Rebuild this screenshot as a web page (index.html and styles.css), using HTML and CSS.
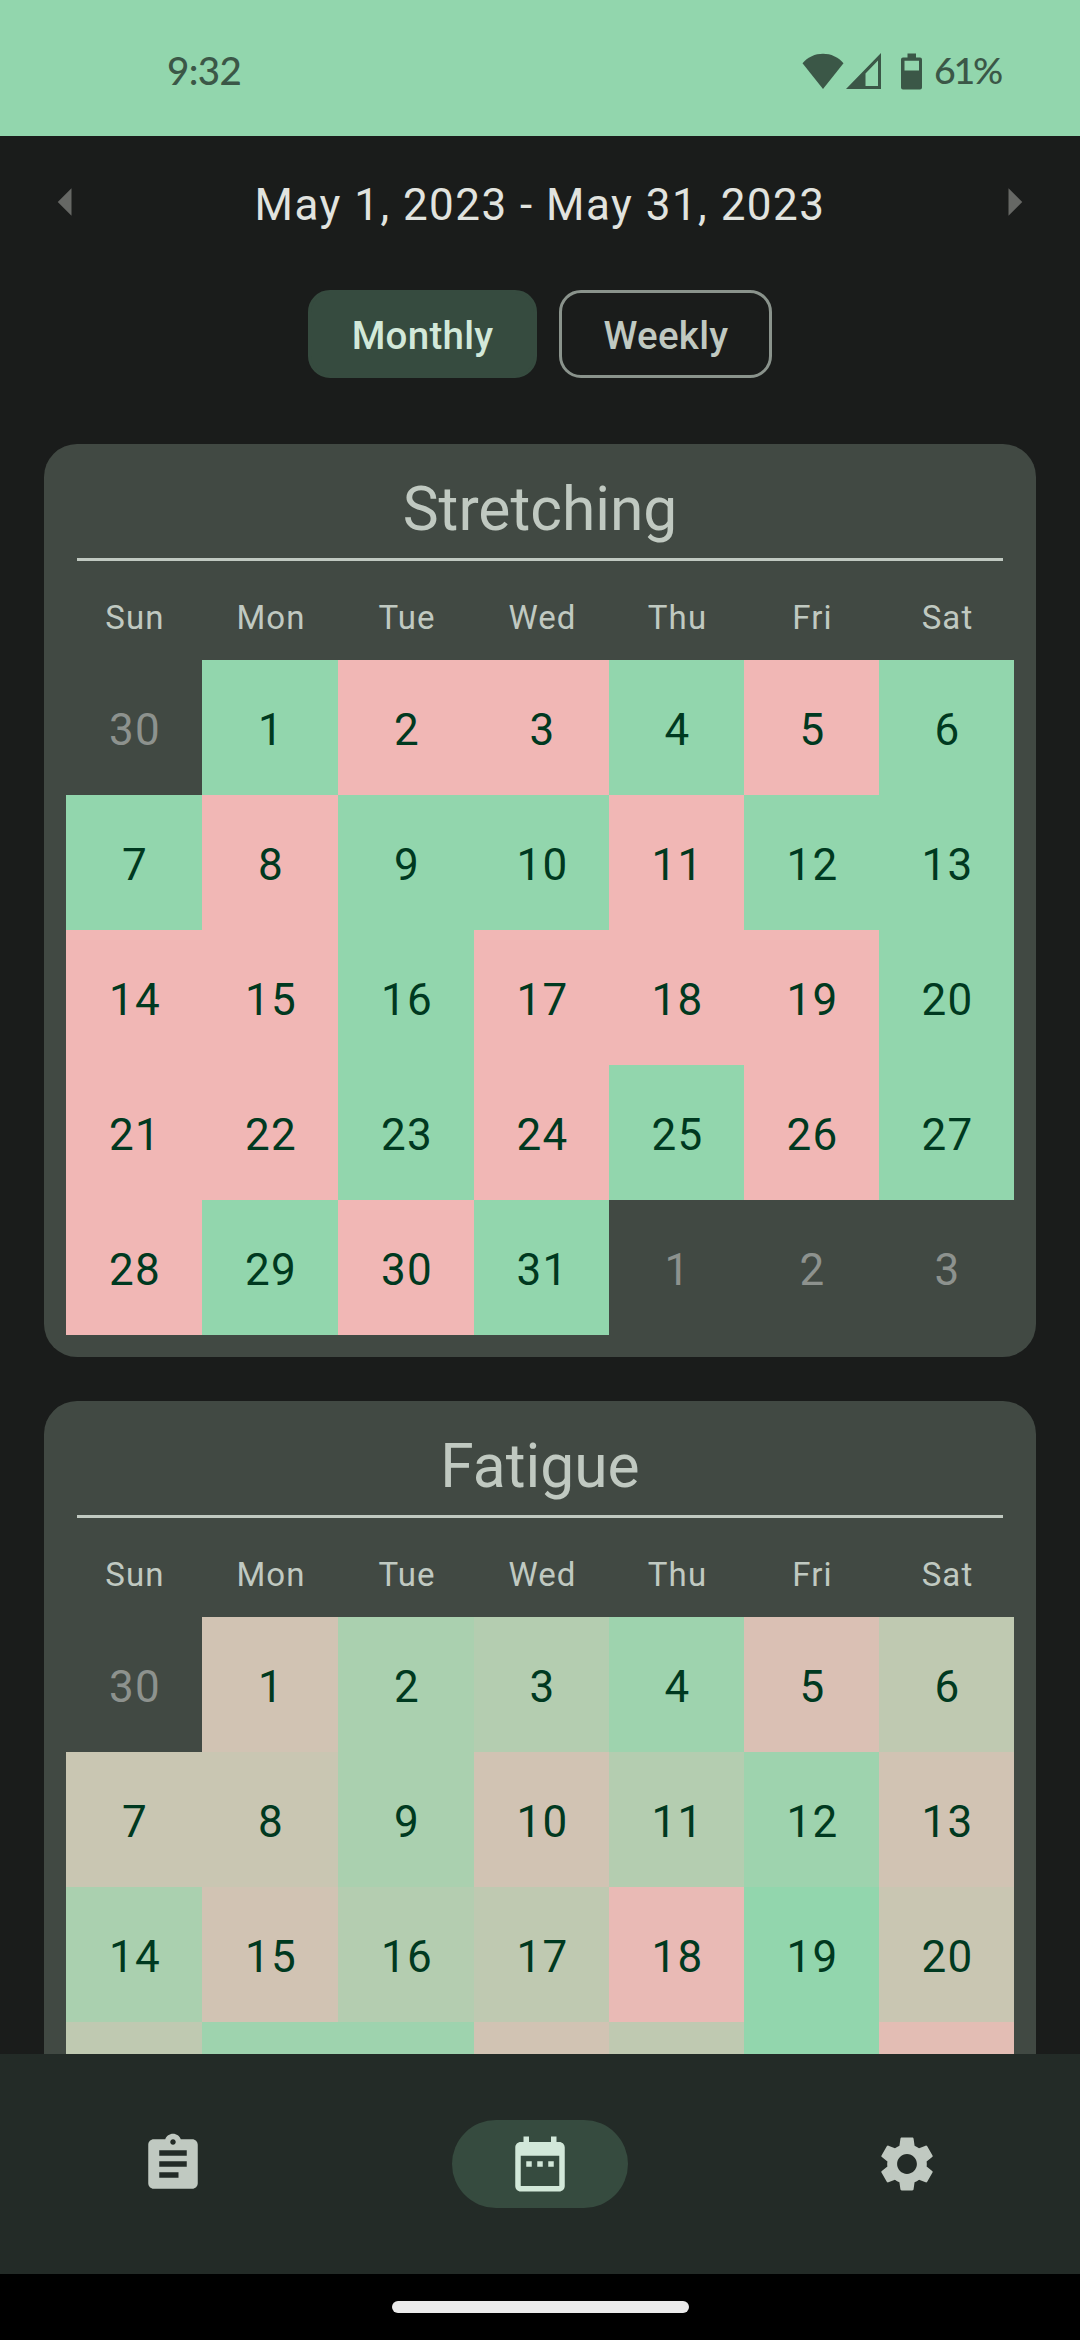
FILE: index.html
```html
<!DOCTYPE html>
<html lang="en">
<head>
<meta charset="utf-8">
<title>Calendar</title>
<link rel="stylesheet" href="styles.css">
</head>
<body>
<div class="screen">
  <header class="status">
    <span class="clock">9:32</span>
    <div class="indicators">
      <svg class="wifi" viewBox="0 0 42 36"><path d="M21 36 0.5 10.2C6 4 13 0.8 21 0.8S36 4 41.500 10.200Z"/></svg>
      <svg class="signal" viewBox="0 0 36 36"><path fill-rule="evenodd" d="M35 0V36H0ZM32 7.500 19.500 20.500V33H32Z"/></svg>
      <svg class="battery" viewBox="0 0 21 36"><path fill-rule="evenodd" d="M6.500 0H15V4H19Q21 4 21 6V34Q21 36 19 36H2Q0 36 0 34V6Q0 4 2 4H6.500ZM3.500 7.300V17H18V7.300Z"/></svg>
      <span class="percent">61%</span>
    </div>
  </header>

  <main class="content">
    <div class="range">
      <svg class="arrow" viewBox="0 0 24 24"><path d="M14 7l-5 5 5 5V7z"/></svg>
      <span class="range-label">May 1, 2023 - May 31, 2023</span>
      <svg class="arrow" viewBox="0 0 24 24"><path d="M10 17l5-5-5-5v10z"/></svg>
    </div>
    <div class="chips">
      <button class="chip chip-selected">Monthly</button>
      <button class="chip">Weekly</button>
    </div>

    <section class="card">
      <h2 class="card-title">Stretching</h2>
      <div class="weekdays"><span>Sun</span><span>Mon</span><span>Tue</span><span>Wed</span><span>Thu</span><span>Fri</span><span>Sat</span></div>
      <div class="days">
        <span class="out">30</span><span class="l0">1</span><span class="l10">2</span><span class="l10">3</span><span class="l0">4</span><span class="l10">5</span><span class="l0">6</span>
        <span class="l0">7</span><span class="l10">8</span><span class="l0">9</span><span class="l0">10</span><span class="l10">11</span><span class="l0">12</span><span class="l0">13</span>
        <span class="l10">14</span><span class="l10">15</span><span class="l0">16</span><span class="l10">17</span><span class="l10">18</span><span class="l10">19</span><span class="l0">20</span>
        <span class="l10">21</span><span class="l10">22</span><span class="l0">23</span><span class="l10">24</span><span class="l0">25</span><span class="l10">26</span><span class="l0">27</span>
        <span class="l10">28</span><span class="l0">29</span><span class="l10">30</span><span class="l0">31</span><span class="out">1</span><span class="out">2</span><span class="out">3</span>
      </div>
    </section>

    <section class="card">
      <h2 class="card-title">Fatigue</h2>
      <div class="weekdays"><span>Sun</span><span>Mon</span><span>Tue</span><span>Wed</span><span>Thu</span><span>Fri</span><span>Sat</span></div>
      <div class="days">
        <span class="out">30</span><span class="l6">1</span><span class="l2">2</span><span class="l3">3</span><span class="l1">4</span><span class="l7">5</span><span class="l4">6</span>
        <span class="l5">7</span><span class="l5">8</span><span class="l2">9</span><span class="l6">10</span><span class="l3">11</span><span class="l1">12</span><span class="l6">13</span>
        <span class="l2">14</span><span class="l6">15</span><span class="l3">16</span><span class="l4">17</span><span class="l9">18</span><span class="l0">19</span><span class="l5">20</span>
        <span class="l4"></span><span class="l1"></span><span class="l1"></span><span class="l6"></span><span class="l4"></span><span class="l0"></span><span class="l8"></span>
      </div>
    </section>
  </main>

  <nav class="nav">
    <a class="nav-item"><svg viewBox="0 0 24 24"><path d="M19 3h-4.180C14.400 1.840 13.300 1 12 1c-1.300 0-2.400.840-2.820 2H5c-1.100 0-2 .900-2 2v14c0 1.100.900 2 2 2h14c1.100 0 2-.900 2-2V5c0-1.100-.900-2-2-2zm-7 0c.550 0 1 .450 1 1s-.450 1-1 1-1-.450-1-1 .450-1 1-1zm2 14H7v-2h7v2zm3-4H7v-2h10v2zm0-4H7V7h10v2z"/></svg></a>
    <a class="nav-item nav-active"><svg viewBox="0 0 24 24"><path d="M9 11H7v2h2v-2zm4 0h-2v2h2v-2zm4 0h-2v2h2v-2zm2-7h-1V2h-2v2H8V2H6v2H5c-1.110 0-1.990.900-1.990 2L3 20c0 1.100.890 2 2 2h14c1.100 0 2-.900 2-2V6c0-1.100-.900-2-2-2zm0 16H5V9h14v11z"/></svg></a>
    <a class="nav-item"><svg viewBox="0 0 24 24"><path d="M19.140 12.940c.040-.300.060-.610.060-.940 0-.320-.020-.640-.070-.940l2.030-1.580c.180-.140.230-.410.120-.610l-1.920-3.320c-.120-.220-.370-.290-.590-.220l-2.390.960c-.500-.380-1.030-.700-1.620-.940l-.360-2.540c-.040-.240-.240-.410-.480-.410h-3.840c-.240 0-.430.170-.470.410l-.360 2.540c-.590.240-1.130.570-1.620.940l-2.390-.960c-.220-.080-.470 0-.590.220L2.740 8.870c-.120.210-.080.470.120.610l2.030 1.580c-.050.300-.090.630-.090.940s.020.640.070.940l-2.030 1.580c-.180.140-.230.410-.120.610l1.920 3.320c.120.220.370.290.590.220l2.390-.960c.500.380 1.030.700 1.620.940l.360 2.540c.050.240.240.410.480.410h3.840c.240 0 .440-.170.470-.410l.360-2.540c.590-.240 1.130-.560 1.620-.940l2.390.960c.220.080.470 0 .590-.220l1.920-3.320c.120-.220.070-.470-.120-.610l-2.010-1.580zM12 15.600c-1.980 0-3.600-1.620-3.600-3.600s1.620-3.600 3.600-3.600 3.600 1.620 3.600 3.600-1.620 3.600-3.600 3.600z"/></svg></a>
  </nav>
  <footer class="gesture"><div class="handle"></div></footer>
</div>
</body>
</html>
```

FILE: styles.css
```css
* { box-sizing: border-box; }

body {
  margin: 0;
  background: #000;
  font-family: Roboto, sans-serif;
}

.screen {
  width: 1080px;
  height: 2340px;
  display: flex;
  flex-direction: column;
  overflow: hidden;
}

.status {
  height: 136px;
  flex: none;
  display: flex;
  justify-content: space-between;
  align-items: center;
  padding: 6px 79px 0 167px;
  background: #92d6ad;
  color: #3b5747;
  fill: #3b5747;
  font-family: Lato, sans-serif;
  font-size: 38.5px;
  font-weight: 500;
}

.clock { margin-bottom: 3px; letter-spacing: -0.6px; }
.percent { margin-bottom: 3px; font-size: 37.5px; letter-spacing: -2.2px; }
.indicators { display: flex; align-items: center; }
.wifi { width: 42px; height: 36px; }
.signal { width: 36px; height: 36px; margin-left: 2px; }
.battery { width: 21px; height: 37px; margin: 0 12px 0 19px; }

.content {
  flex: 1;
  min-height: 0;
  overflow: hidden;
  padding: 0 44px;
  background: #1a1c1b;
}

.range {
  display: flex;
  justify-content: space-between;
  align-items: center;
  height: 66px;
  margin: 33px -11px 0;
}
.arrow { width: 66px; height: 66px; fill: #666865; }
.range-label {
  color: #e1e3df;
  font-size: 44px;
  line-height: 66px;
  letter-spacing: 1.47px;
  padding-top: 5px;
}

.chips {
  display: flex;
  justify-content: center;
  gap: 22px;
  margin: 55px 0 66px;
}
.chip {
  height: 88px;
  padding: 3px 41px 0;
  border: 3px solid #8a938c;
  border-radius: 22px;
  background: none;
  color: #c0c9c1;
  font: 500 38.5px/54px Roboto, sans-serif;
  letter-spacing: 0.275px;
}
.chip-selected {
  border-color: #364b3f;
  background: #364b3f;
  color: #d2e8d9;
}

.card {
  margin-bottom: 44px;
  padding: 0 22px 22px;
  border-radius: 33px;
  background: #414943;
  color: #c0c9c1;
}
.card-title {
  height: 117px;
  margin: 0 11px;
  padding-top: 27px;
  border-bottom: 3px solid #c0c9c1;
  font-size: 60.5px;
  font-weight: 400;
  line-height: 77px;
  text-align: center;
}
.weekdays,
.days {
  display: grid;
  grid-template-columns: repeat(3, 136px) repeat(4, 135px);
  text-align: center;
  text-indent: 2px;
}
.weekdays {
  height: 99px;
  font-size: 33px;
  line-height: 114px;
  letter-spacing: 1.1px;
}
.days {
  grid-auto-rows: 135px;
  color: #003920;
  font-size: 44px;
  line-height: 141px;
  letter-spacing: 1.375px;
}
.days span { height: 135px; }
.out { color: #8d928e; }

/* day shades, from lowest to highest value */
.l0 { background: #92d6ad; }
.l1 { background: #9ed3ae; }
.l2 { background: #aad0af; }
.l3 { background: #b4cdb0; }
.l4 { background: #bfc9b1; }
.l5 { background: #c9c6b2; }
.l6 { background: #d1c3b3; }
.l7 { background: #dac0b4; }
.l8 { background: #e3bdb4; }
.l9 { background: #e9bab5; }
.l10 { background: #f1b7b5; }

.nav {
  height: 220px;
  flex: none;
  display: grid;
  grid-template-columns: repeat(3, 1fr);
  gap: 22px;
  place-items: center;
  background: #232b27;
}
.nav-item {
  width: 176px;
  height: 88px;
  display: flex;
  justify-content: center;
  align-items: center;
  border-radius: 44px;
  fill: #c0c9c1;
}
.nav-item svg { width: 66px; height: 66px; }
.nav-active { background: #364b3f; fill: #d2e8d9; }

.gesture {
  height: 66px;
  flex: none;
  display: flex;
  justify-content: center;
  align-items: center;
  background: #000;
}
.handle { width: 297px; height: 12px; border-radius: 6px; background: #ebebeb; }
```
